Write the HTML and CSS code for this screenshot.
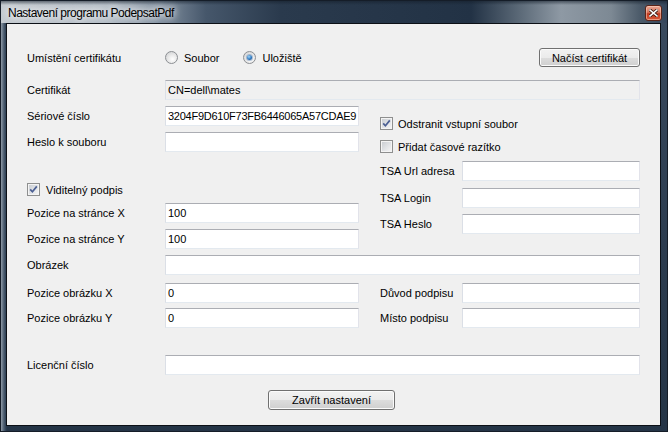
FILE: index.html
```html
<!DOCTYPE html>
<html lang="cs">
<head>
  <meta charset="UTF-8" />
  <title>Nastavení programu PodepsatPdf</title>
  <link rel="stylesheet" href="styles.css">
</head>
<body>

  <div class="window">
    <div class="titlebar">
      <span class="title">Nastavení programu PodepsatPdf</span>
      <span class="close">
        <svg width="9" height="8" viewBox="0 0 9 8">
          <path d="M1 1 L8 7 M8 1 L1 7" stroke="#3a1a12" stroke-width="3.2" stroke-linecap="square" fill="none"/>
          <path d="M1 1 L8 7 M8 1 L1 7" stroke="#ffffff" stroke-width="1.6" stroke-linecap="square" fill="none"/>
        </svg>
      </span>
    </div>

    <div class="client">

      <div class="row top">
        <span class="label">Umístění certifikátu</span>
        <span class="option"><span class="radio"></span>Soubor</span>
        <span class="option second"><span class="radio checked"></span>Uložiště</span>
        <button class="btn btn-load">Načíst certifikát</button>
      </div>

      <div class="row gap-cert">
        <span class="label">Certifikát</span>
        <div class="field wide readonly">CN=dell\mates</div>
      </div>

      <div class="split">
        <div class="col-left">
          <div class="row">
            <span class="label">Sériové číslo</span>
            <div class="field short serial">3204F9D610F73FB6446065A57CDAE9</div>
          </div>
          <div class="row gap-6">
            <span class="label">Heslo k souboru</span>
            <div class="field short"></div>
          </div>
          <div class="check-row gap-visible">
            <span class="check checked">
              <svg width="9" height="9" viewBox="0 0 9 9"><path d="M1.2 4.4 L3.4 6.8 L7.8 1.4" stroke="#4b5f93" stroke-width="1.7" fill="none"/></svg>
            </span>
            <span>Viditelný podpis</span>
          </div>
          <div class="row gap-7">
            <span class="label">Pozice na stránce X</span>
            <div class="field short">100</div>
          </div>
          <div class="row gap-6">
            <span class="label">Pozice na stránce Y</span>
            <div class="field short">100</div>
          </div>
        </div>

        <div class="col-right">
          <div class="check-row right gap-remove">
            <span class="check checked">
              <svg width="9" height="9" viewBox="0 0 9 9"><path d="M1.2 4.4 L3.4 6.8 L7.8 1.4" stroke="#4b5f93" stroke-width="1.7" fill="none"/></svg>
            </span>
            <span>Odstranit vstupní soubor</span>
          </div>
          <div class="check-row right gap-stamp">
            <span class="check"></span>
            <span>Přidat časové razítko</span>
          </div>
          <div class="rrow gap-tsa">
            <span class="rlabel">TSA Url adresa</span>
            <div class="field side"></div>
          </div>
          <div class="rrow gap-7">
            <span class="rlabel">TSA Login</span>
            <div class="field side"></div>
          </div>
          <div class="rrow gap-6">
            <span class="rlabel">TSA Heslo</span>
            <div class="field side"></div>
          </div>
        </div>
      </div>

      <div class="row gap-6">
        <span class="label">Obrázek</span>
        <div class="field wide"></div>
      </div>

      <div class="split gap-image">
        <div class="col-left">
          <div class="row">
            <span class="label">Pozice obrázku X</span>
            <div class="field short">0</div>
          </div>
          <div class="row gap-5">
            <span class="label">Pozice obrázku Y</span>
            <div class="field short">0</div>
          </div>
        </div>
        <div class="col-right">
          <div class="rrow">
            <span class="rlabel">Důvod podpisu</span>
            <div class="field side"></div>
          </div>
          <div class="rrow gap-5">
            <span class="rlabel">Místo podpisu</span>
            <div class="field side"></div>
          </div>
        </div>
      </div>

      <div class="row gap-licence">
        <span class="label">Licenční číslo</span>
        <div class="field wide"></div>
      </div>

      <button class="btn btn-close">Zavřít nastavení</button>

    </div>
  </div>

</body>
</html>
```

FILE: styles.css
```css
    body {
      margin: 0;
      background: #ffffff;
      font-family: "Liberation Sans", Arial, sans-serif;
      font-size: 11px;
      color: #000;
    }

    .window {
      width: 668px;
      height: 432px;
      box-sizing: border-box;
      border: 1px solid #151d28;
      padding: 0 6px 5px 5px;
      display: flex;
      flex-direction: column;
      background:
        linear-gradient(to right, #8f9aa6 0, #4a5b6e 3px, #2c3d51 5px, transparent 6px),
        linear-gradient(to bottom, #3a4b5f 0, #2b3b4e 60%, #243446 100%);
    }

    /* aero title bar */
    .titlebar {
      height: 22px;
      margin: 0 -6px 0 -5px;
      padding: 0 6px 0 7px;
      display: flex;
      justify-content: space-between;
      align-items: center;
      background:
        linear-gradient(to bottom, rgba(20, 30, 42, 0.55) 0, rgba(20, 30, 42, 0) 4px),
        linear-gradient(to right, #c4cad0 0, #b3bcc5 110px, #8795a4 155px, #46576b 205px,
          #2a3a4d 280px, #223245 470px, #5d6b79 520px, #8e99a4 560px, #7d8994 610px,
          #4a5968 640px, #33445a 668px);
    }

    .title {
      font-size: 12px;
      letter-spacing: -0.5px;
      padding-top: 1px;
      text-shadow: 0 0 6px #ffffff, 0 0 10px #ffffff;
    }

    .close {
      align-self: flex-start;
      margin-top: 4px;
      margin-right: -1px;
      width: 17px;
      height: 16px;
      box-sizing: border-box;
      border: 1px solid #5c2418;
      border-radius: 3px;
      display: flex;
      align-items: center;
      justify-content: center;
      background: linear-gradient(to bottom, #eaa895 0, #d7735b 45%, #c2391f 55%, #d8583a 100%);
      box-shadow: inset 0 0 0 1px rgba(255, 220, 200, 0.5);
    }

    .client {
      flex: 1;
      background: #f0f0f0;
      border: 1px solid #0c1016;
      display: flex;
      flex-direction: column;
      align-items: flex-start;
    }

    .row {
      display: flex;
      align-items: center;
      height: 20px;
      padding-left: 20px;
    }

    .label {
      width: 138px;
      flex: none;
    }

    .top {
      margin-top: 24px;
      height: 19px;
      width: 613px;
    }

    .option {
      display: flex;
      align-items: center;
      gap: 6px;
    }

    .option.second {
      margin-left: 24px;
    }

    .radio {
      width: 13px;
      height: 13px;
      box-sizing: border-box;
      border-radius: 50%;
      border: 1px solid #8c8f93;
      background: radial-gradient(circle at 60% 65%, #ffffff 0, #e9e9e9 45%, #c9cbcd 100%);
      display: flex;
      align-items: center;
      justify-content: center;
    }

    .radio.checked::after {
      content: "";
      width: 5px;
      height: 5px;
      border-radius: 50%;
      background: radial-gradient(circle at 40% 35%, #9ed6fa 0, #2f78c0 55%, #123f78 100%);
      box-shadow: 0 0 0 1px rgba(40, 90, 150, 0.35);
    }

    .field {
      box-sizing: border-box;
      height: 20px;
      background: #ffffff;
      border: 1px solid;
      border-color: #abadb3 #e2e3ea #e3e9ef #dbdfe6;
      padding: 0 2px;
      line-height: 18px;
      white-space: nowrap;
      overflow: hidden;
      font-size: 11px;
    }

    .field.wide {
      width: 475px;
    }

    .field.short {
      width: 194px;
    }

    .field.side {
      width: 178px;
    }

    .field.readonly {
      background: #f0f0f0;
    }

    .field.serial {
      letter-spacing: -0.25px;
      padding-right: 0;
    }

    .split {
      display: flex;
      align-items: flex-start;
      margin-top: 6px;
    }

    .col-left {
      width: 352px;
    }

    .col-right {
      margin-left: 21px;
      display: flex;
      flex-direction: column;
    }

    .check-row {
      display: flex;
      align-items: center;
      gap: 6px;
      height: 13px;
      padding-left: 20px;
    }

    .check-row.right {
      padding-left: 0;
      gap: 5px;
    }

    .check {
      width: 13px;
      height: 13px;
      box-sizing: border-box;
      border: 1px solid #8e8f8f;
      background: linear-gradient(135deg, #c6cacf 0, #e2e4e7 55%, #f7f7f7 100%);
      box-shadow: inset 0 0 0 1px #f4f4f4;
      display: flex;
      align-items: center;
      justify-content: center;
    }

    .rrow {
      display: flex;
      align-items: center;
      height: 20px;
    }

    .rlabel {
      width: 82px;
      flex: none;
    }

    .gap-cert { margin-top: 13px; }
    .gap-5 { margin-top: 5px; }
    .gap-6 { margin-top: 6px; }
    .gap-7 { margin-top: 7px; }
    .gap-visible { margin-top: 31px; }
    .gap-remove { margin-top: 11px; }
    .gap-stamp { margin-top: 10px; }
    .gap-tsa { margin-top: 8px; }
    .gap-image { margin-top: 8px; }
    .gap-licence { margin-top: 27px; }

    .btn {
      font-family: "Liberation Sans", Arial, sans-serif;
      font-size: 11px;
      color: #000;
      padding: 0;
      border: 1px solid #707070;
      border-radius: 3px;
      background: linear-gradient(to bottom, #f2f2f2 0, #ebebeb 50%, #dddddd 50%, #cfcfcf 100%);
      box-shadow: inset 0 0 0 1px #fbfbfb;
    }

    .btn-load {
      margin-left: auto;
      width: 101px;
      height: 19px;
    }

    .btn-close {
      margin-top: 15px;
      margin-left: 261px;
      width: 127px;
      height: 20px;
    }
```
